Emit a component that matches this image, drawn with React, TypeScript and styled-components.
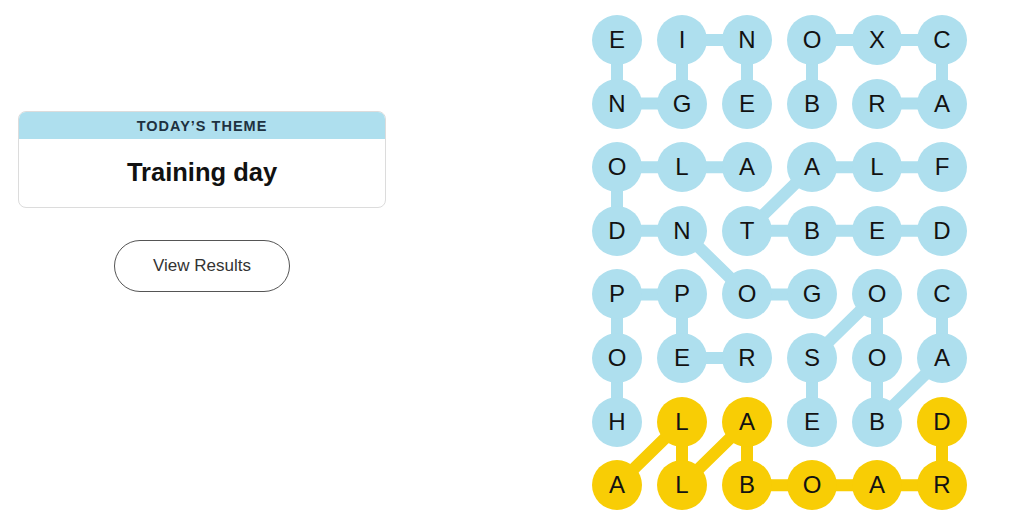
import React from "react";
import styled, { createGlobalStyle } from "styled-components";

const GlobalStyle = createGlobalStyle`
  body {
    margin: 0;
    background: #ffffff;
    font-family: "Liberation Sans", Arial, sans-serif;
  }
`;

const BLUE = "#aedfee";
const GOLD = "#f8cd05";
const COL = 65;
const ROW = 63.6;
const DOT = 50;

const letters = [
  "EINOXC",
  "NGEBRA",
  "OLAALF",
  "DNTBED",
  "PPOGOC",
  "OERSOA",
  "HLAEBD",
  "ALBOAR",
];

// words as paths of [row, col]
const words: { path: number[][]; gold?: boolean }[] = [
  { path: [[0, 0], [1, 0], [1, 1], [0, 1], [0, 2], [1, 2]] }, // ENGINE
  { path: [[1, 3], [0, 3], [0, 4], [0, 5], [1, 5], [1, 4]] }, // BOXCAR
  { path: [[4, 3], [4, 2], [3, 1], [3, 0], [2, 0], [2, 1], [2, 2]] }, // GONDOLA
  { path: [[2, 5], [2, 4], [2, 3], [3, 2], [3, 3], [3, 4], [3, 5]] }, // FLATBED
  { path: [[6, 0], [5, 0], [4, 0], [4, 1], [5, 1], [5, 2]] }, // HOPPER
  { path: [[4, 5], [5, 5], [6, 4], [5, 4], [4, 4], [5, 3], [6, 3]] }, // CABOOSE
  { path: [[7, 0], [6, 1], [7, 1], [6, 2], [7, 2], [7, 3], [7, 4], [7, 5], [6, 5]], gold: true }, // ALLABOARD
];

const goldCells = new Set(words.filter((w) => w.gold).flatMap((w) => w.path.map(([r, c]) => `${r}-${c}`)));

const Page = styled.div`
  display: flex;
  align-items: flex-start;
  width: 1024px;
  height: 518px;
  overflow: hidden;
`;

const Side = styled.div`
  display: flex;
  flex-direction: column;
  align-items: center;
  width: 368px;
  margin: 111px 0 0 18px;
`;

const ThemeCard = styled.div`
  width: 100%;
  box-sizing: border-box;
  border: 1px solid #dcdcdc;
  border-radius: 8px;
  overflow: hidden;
  background: #fff;
`;

const ThemeHead = styled.div`
  height: 27px;
  background: ${BLUE};
  display: flex;
  align-items: center;
  justify-content: center;
  font-size: 14.5px;
  font-weight: 700;
  letter-spacing: 1px;
  color: #1e3140;
`;

const ThemeText = styled.div`
  height: 68px;
  display: flex;
  align-items: center;
  justify-content: center;
  font-size: 25.5px;
  font-weight: 700;
  color: #111;
  padding-bottom: 2px;
  box-sizing: border-box;
`;

const ResultsButton = styled.button`
  margin-top: 32px;
  width: 176px;
  height: 52px;
  border-radius: 26px;
  border: 1.5px solid #555;
  background: #fff;
  font-family: "Liberation Sans", Arial, sans-serif;
  font-size: 17px;
  color: #333;
  cursor: pointer;
`;

const Board = styled.div`
  position: relative;
  margin: 15px 0 0 206px;
`;

const Lines = styled.svg`
  position: absolute;
  left: 0;
  top: 0;
  overflow: visible;
`;

const Grid = styled.div`
  position: relative;
  display: grid;
  grid-template-columns: repeat(6, ${DOT}px);
  grid-auto-rows: ${DOT}px;
  column-gap: ${COL - DOT}px;
  row-gap: ${ROW - DOT}px;
`;

const Cell = styled.div<{ $gold?: boolean }>`
  width: ${DOT}px;
  height: ${DOT}px;
  border-radius: 50%;
  background: ${(p) => (p.$gold ? GOLD : BLUE)};
  display: flex;
  align-items: center;
  justify-content: center;
  font-size: 24px;
  color: #121212;
`;

const cx = (c: number) => DOT / 2 + c * COL;
const cy = (r: number) => DOT / 2 + r * ROW;

export default function App() {
  return (
    <>
      <GlobalStyle />
      <Page>
        <Side>
          <ThemeCard>
            <ThemeHead>TODAY’S THEME</ThemeHead>
            <ThemeText>Training day</ThemeText>
          </ThemeCard>
          <ResultsButton>View Results</ResultsButton>
        </Side>
        <Board>
          <Lines width={6 * COL} height={8 * ROW}>
            {words.map((w, i) => (
              <polyline
                key={i}
                points={w.path.map(([r, c]) => `${cx(c)},${cy(r)}`).join(" ")}
                fill="none"
                stroke={w.gold ? GOLD : BLUE}
                strokeWidth={12}
                strokeLinejoin="round"
              />
            ))}
          </Lines>
          <Grid>
            {letters.flatMap((row, r) =>
              row.split("").map((ch, c) => (
                <Cell key={`${r}-${c}`} $gold={goldCells.has(`${r}-${c}`)}>
                  {ch}
                </Cell>
              ))
            )}
          </Grid>
        </Board>
      </Page>
    </>
  );
}
